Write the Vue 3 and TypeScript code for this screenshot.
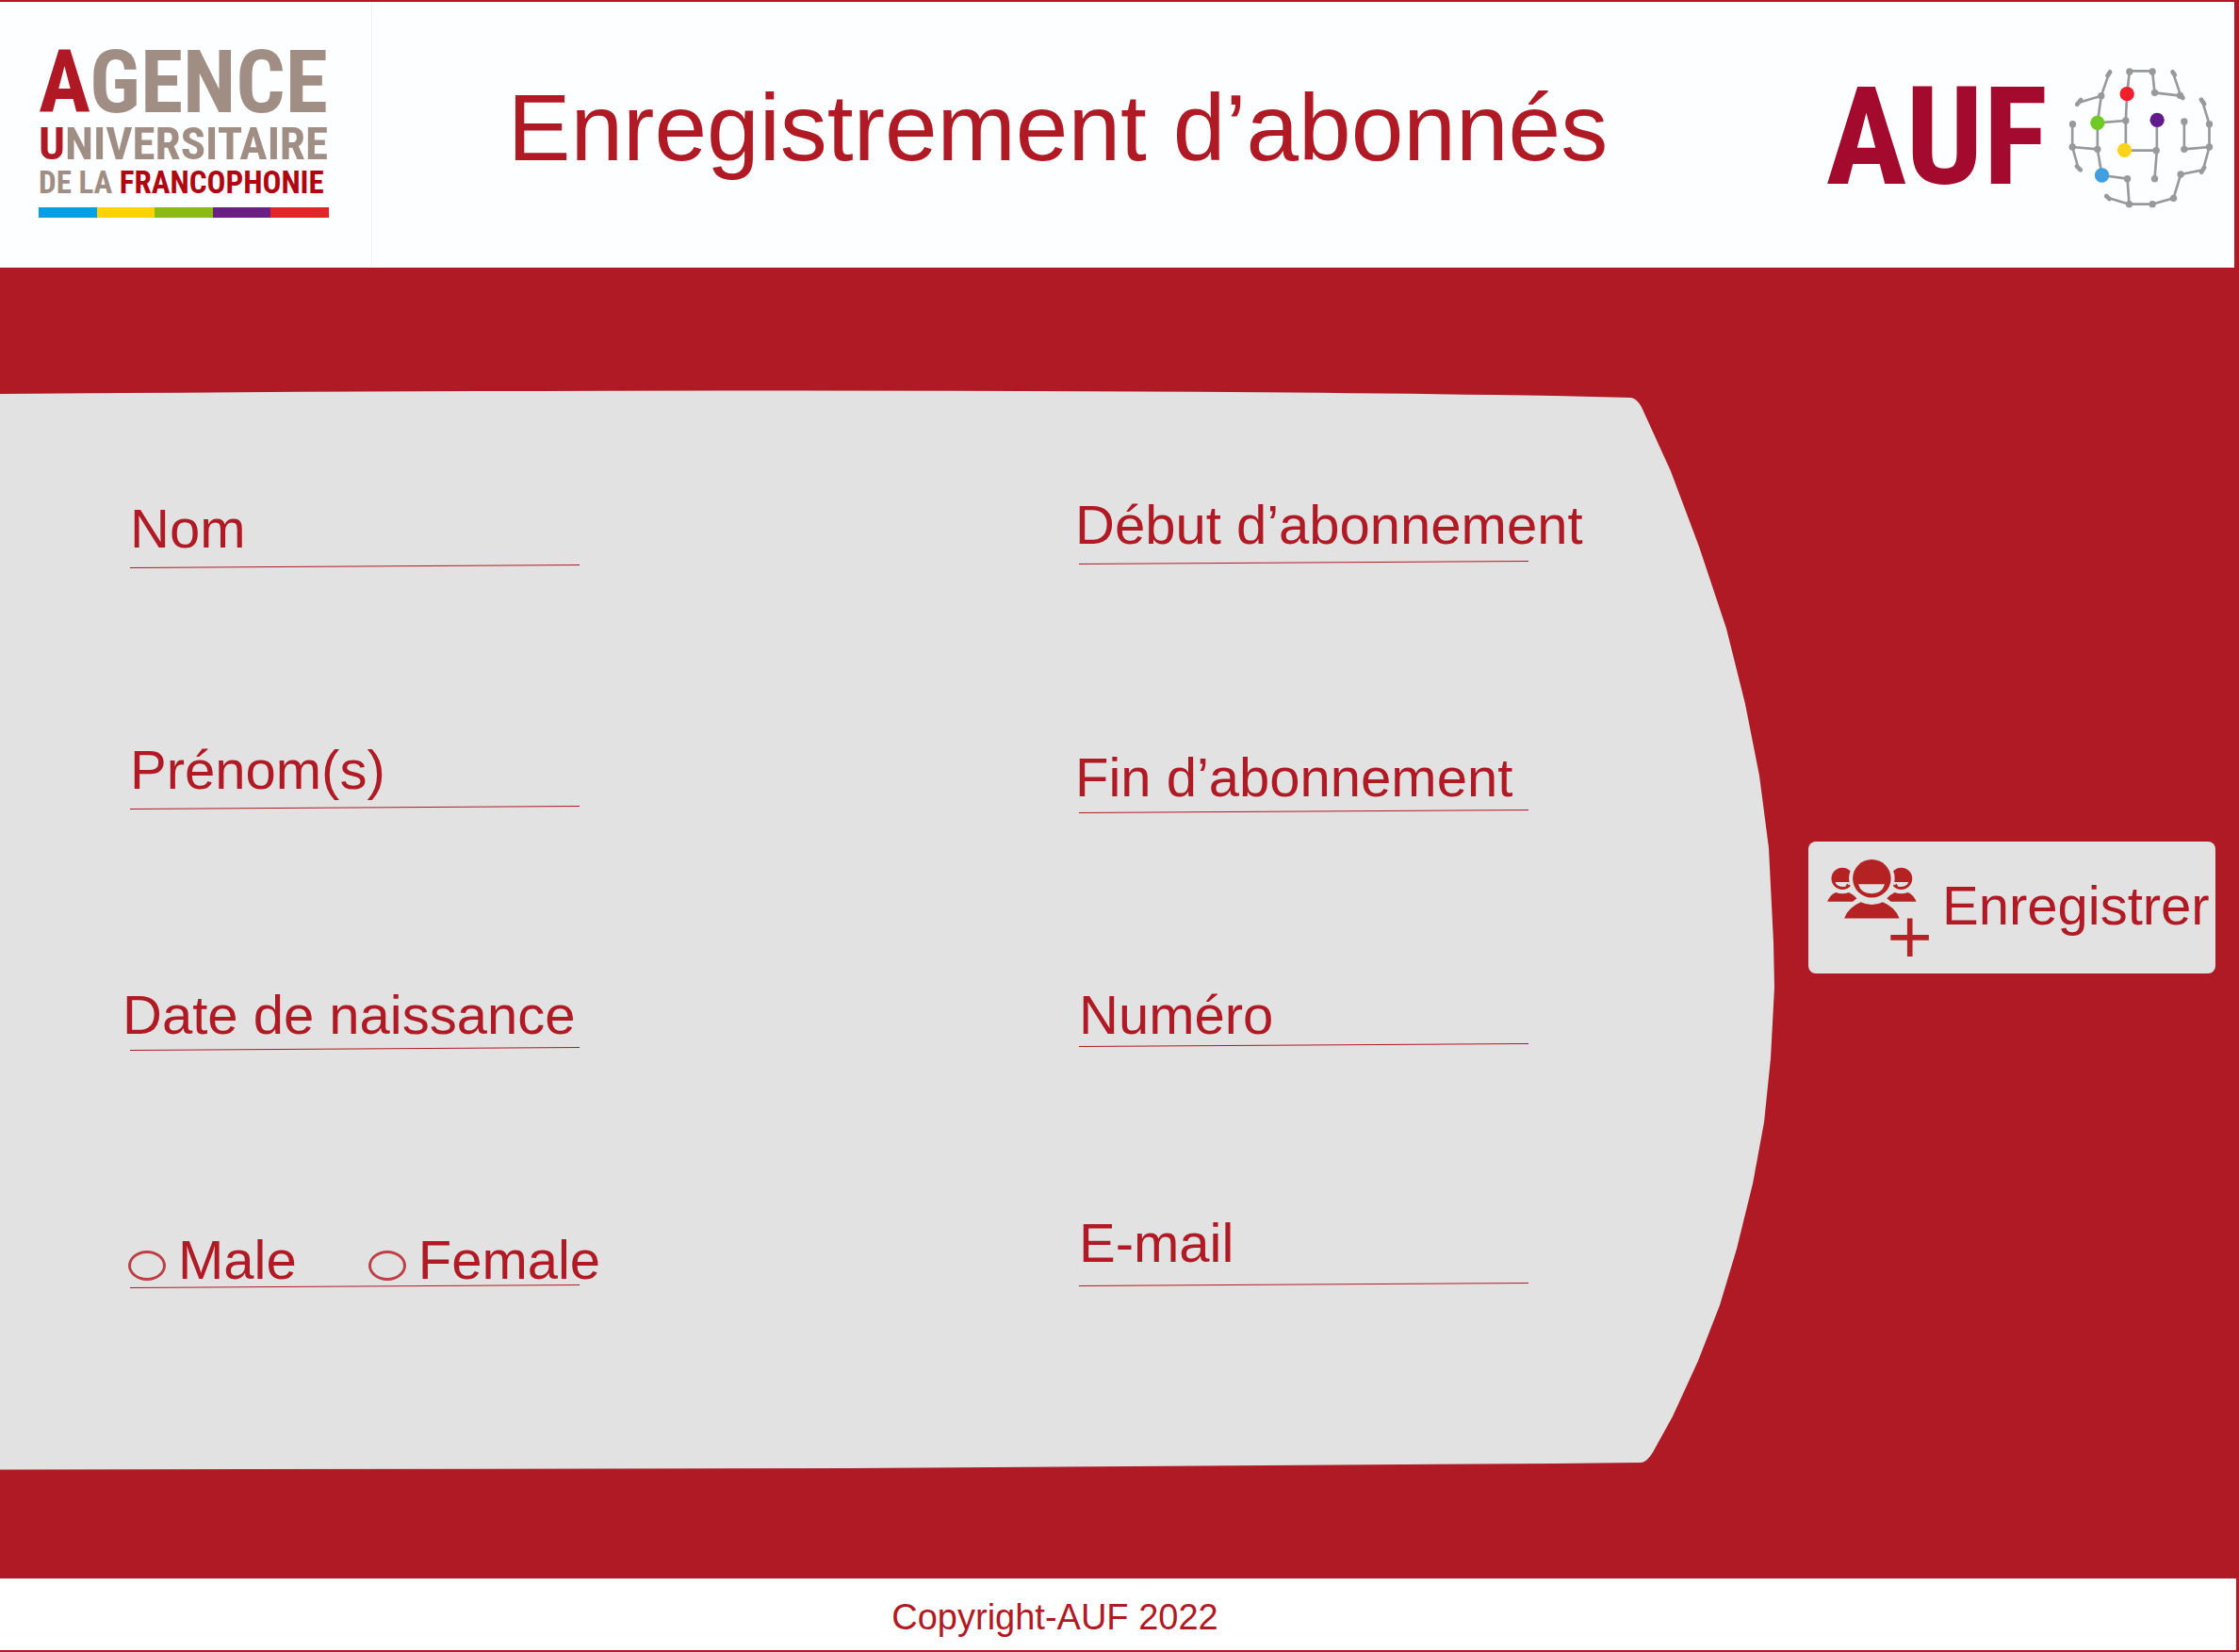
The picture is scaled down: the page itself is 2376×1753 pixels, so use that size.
<script setup lang="ts">
import { reactive, ref } from 'vue'

type Gap = 'tight' | 'snug' | 'normal' | 'loose'
type Hang = 'flush' | 'hang' | 'wide'

interface Field {
  id: string
  label: string
  type: string
  gap: Gap
  hang: Hang
}

const identity: Field[] = [
  { id: 'nom', label: 'Nom', type: 'text', gap: 'normal', hang: 'flush' },
  { id: 'prenom', label: 'Prénom(s)', type: 'text', gap: 'normal', hang: 'flush' },
  { id: 'naissance', label: 'Date de naissance', type: 'text', gap: 'snug', hang: 'wide' },
]

const subscription: Field[] = [
  { id: 'debut', label: 'Début d’abonnement', type: 'text', gap: 'normal', hang: 'hang' },
  { id: 'fin', label: 'Fin d’abonnement', type: 'text', gap: 'snug', hang: 'hang' },
  { id: 'numero', label: 'Numéro', type: 'tel', gap: 'tight', hang: 'flush' },
  { id: 'email', label: 'E-mail', type: 'email', gap: 'loose', hang: 'flush' },
]

const genders = ['Male', 'Female']

const values = reactive<Record<string, string>>({})
const gender = ref('')

const links = [
  'M1015 230L990 302L917 324',
  'M990 302L978 388V472L992 555L1073 566L1079 647H1153L1220 628L1243 552L1314 538L1334 465V392L1312 320',
  'M1079 647L1010 626',
  'M978 388L1068 381',
  'M1153 223H1080L1072 296L1068 381V476H1165',
  'M1153 225L1160 292L1243 302L1219 230',
  'M1167 380V476L1160 566',
  'M1254 384V472L1334 465',
  'M978 472L898 465V392',
  'M898 465L917 532',
]

const joints = [
  [990, 302], [1080, 225], [1153, 225], [1160, 292], [1068, 381], [978, 472],
  [898, 465], [899, 392], [1073, 566], [1079, 647], [1153, 647], [1220, 628],
  [1243, 552], [1334, 465], [1334, 392], [1254, 384], [1254, 472], [1165, 476],
  [1160, 566], [1241, 301],
]

const tips = [
  'M1010 238L1018 226', 'M913 329L925 315', 'M1217 226L1224 236', 'M1243 300L1250 309',
  'M1308 314L1318 328', 'M1318 530L1309 545', 'M912 526L924 538', 'M1006 621L1016 630',
]

const hubs = [
  { x: 1072, y: 296, color: '#ef1f2c' },
  { x: 978, y: 388, color: '#70c927' },
  { x: 1168, y: 379, color: '#621a8c' },
  { x: 1064, y: 475, color: '#fbd31b' },
  { x: 992, y: 555, color: '#419fdf' },
]
</script>

<template>
  <div class="page">
    <header class="header">
      <div class="agency">
        <svg class="agency-logo" viewBox="0 0 308 184" role="img" aria-label="Agence universitaire de la Francophonie">
          <text x="0" y="71" class="line-1"><tspan class="red">A</tspan>GENCE</text>
          <text x="0" y="121" class="line-2"><tspan class="red">U</tspan>NIVERSITAIRE</text>
          <text x="0" y="157" class="line-3">DE LA <tspan class="deep">FRANCOPHONIE</tspan></text>
          <g>
            <rect x="0" y="172" width="62" height="11" fill="#00a0e3" />
            <rect x="62" y="172" width="61" height="11" fill="#fdd400" />
            <rect x="123" y="172" width="62" height="11" fill="#8abb14" />
            <rect x="185" y="172" width="61" height="11" fill="#6a1f84" />
            <rect x="246" y="172" width="62" height="11" fill="#e32529" />
          </g>
        </svg>
      </div>
      <h1 class="title">Enregistrement d’abonnés</h1>
      <div class="brand">
        <span class="brand-name">AUF</span>
        <svg class="globe" viewBox="880 207 470 456" aria-hidden="true">
          <g fill="none" stroke="#999" stroke-width="8" stroke-linejoin="round">
            <path v-for="d in links" :key="d" :d="d" />
          </g>
          <g stroke="#999" stroke-width="14" stroke-linecap="round">
            <path v-for="d in tips" :key="d" :d="d" />
          </g>
          <circle v-for="(j, i) in joints" :key="i" :cx="j[0]" :cy="j[1]" r="11" fill="#999" />
          <circle v-for="h in hubs" :key="h.color" :cx="h.x" :cy="h.y" r="23" :fill="h.color" />
        </svg>
      </div>
    </header>

    <form class="main" @submit.prevent>
      <div class="panel">
        <svg class="panel-shape" viewBox="0 414 1884 1146" preserveAspectRatio="none" aria-hidden="true">
          <path
            fill="#e2e2e2"
            d="M0 418Q1050 410 1650 420L1731 422Q1737 423 1742 432L1773 500L1803 580L1832 667L1852 747L1867 823L1877 900L1882 1000L1883 1048L1879 1123L1872 1191L1860 1256L1843 1325L1825 1385L1802 1444L1775 1503L1754 1541Q1748 1551 1742 1552L1650 1553L900 1558L0 1559.500Z"
          />
        </svg>

        <div class="column column-identity">
          <div v-for="f in identity" :key="f.id" class="field">
            <div class="entry" :class="f.gap">
              <input :id="f.id" v-model="values[f.id]" class="input" :type="f.type" placeholder=" " />
              <label class="label" :class="f.hang" :for="f.id">{{ f.label }}</label>
            </div>
            <svg class="rule" viewBox="0 0 477 4" preserveAspectRatio="none" aria-hidden="true">
              <path d="M0 3.500L477 0.500" stroke="#b01a24" />
            </svg>
          </div>
          <div class="field">
            <div class="choices" role="radiogroup" aria-label="Genre">
              <label v-for="g in genders" :key="g" class="choice">
                <input v-model="gender" class="radio" type="radio" name="gender" :value="g" />
                <span>{{ g }}</span>
              </label>
            </div>
            <svg class="rule" viewBox="0 0 477 4" preserveAspectRatio="none" aria-hidden="true">
              <path d="M0 3.500L477 0.500" stroke="#b01a24" />
            </svg>
          </div>
        </div>

        <div class="column column-subscription">
          <div v-for="f in subscription" :key="f.id" class="field">
            <div class="entry" :class="f.gap">
              <input :id="f.id" v-model="values[f.id]" class="input" :type="f.type" placeholder=" " />
              <label class="label" :class="f.hang" :for="f.id">{{ f.label }}</label>
            </div>
            <svg class="rule" viewBox="0 0 477 4" preserveAspectRatio="none" aria-hidden="true">
              <path d="M0 3.500L477 0.500" stroke="#b01a24" />
            </svg>
          </div>
        </div>
      </div>

      <div class="actions">
        <button class="submit" type="submit">
          <svg class="people" viewBox="177 155 324 310" aria-hidden="true">
            <g fill="#b52224">
              <circle cx="225" cy="216" r="35" />
              <circle cx="413" cy="216" r="35" />
              <path d="M177 290Q185 268 204 260Q225 268 246 260Q262 268 271 279L258 290Z" />
              <path d="M461 290Q453 268 434 260Q413 268 392 260Q376 268 367 279L380 290Z" />
            </g>
            <g fill="#e2e2e2">
              <path d="M202 227H248V236Q238 243 225 242Q206 240 202 227Z" />
              <path d="M436 227H390V236Q400 243 413 242Q432 240 436 227Z" />
              <circle cx="319" cy="216" r="73" />
            </g>
            <g fill="#b52224">
              <path d="M240 232Q246 240 250 236Q246 248 232 249Z" />
              <path d="M398 232Q392 240 388 236Q392 248 406 249Z" />
              <circle cx="319" cy="216" r="61" />
              <path d="M231 343Q243 308 284 291Q319 308 354 291Q395 308 407 343Z" />
              <path d="M432 343H449V396H501V413H449V465H432V413H379V396H432Z" />
            </g>
            <path fill="#e2e2e2" d="M276 234H360Q352 264 318 264Q284 264 276 234Z" />
          </svg>
          <span class="submit-text">Enregistrer</span>
        </button>
      </div>
    </form>

    <footer class="footer">Copyright-AUF 2022</footer>
  </div>
</template>

<style>
body {
  margin: 0;
  background: #af1a24;
}
</style>

<style scoped>
.page {
  display: grid;
  grid-template-rows: auto 1fr auto;
  min-height: 100vh;
  box-sizing: border-box;
  padding: 2px 0;
  overflow: hidden;
  background: #af1a24;
  color: #b01a24;
  font-family: "Liberation Sans", Arial, sans-serif;
}

.header {
  display: grid;
  grid-template-columns: 395px 1fr 521px;
  align-items: center;
  height: 282px;
  margin-right: 5px;
  background: #fdfeff;
}

.agency {
  display: flex;
  align-items: center;
  align-self: stretch;
  box-sizing: border-box;
  padding: 0 0 6px 41px;
  border-right: 1px solid #f8f0f2;
}

.agency-logo {
  width: 308px;
  height: 184px;
  overflow: visible;
  fill: #a08e84;
  font-family: "Roboto Condensed", "Liberation Sans Narrow", "Liberation Sans", sans-serif;
  font-weight: 700;
}

.line-1 {
  font-size: 92px;
}

.line-2 {
  font-size: 49px;
}

.line-3 {
  font-size: 33px;
}

.red {
  fill: #b01824;
}

.deep {
  fill: #b00610;
}

.title {
  margin: 0;
  padding-bottom: 16px;
  font-size: 100px;
  font-weight: 400;
  line-height: 112px;
  text-align: center;
  white-space: nowrap;
}

.brand {
  display: flex;
  align-items: center;
  justify-content: flex-end;
  gap: 20px;
  padding: 6px 21px 0 0;
}

.brand-name {
  color: #a30a2d;
  font-family: "Roboto Condensed", "Liberation Sans Narrow", "Liberation Sans", sans-serif;
  font-size: 144px;
  font-weight: 700;
  line-height: 152px;
}

.globe {
  width: 157px;
  height: 152px;
}

.main {
  display: grid;
  grid-template-columns: 1884fr 492fr;
  padding: 130px 0 115px;
}

.panel {
  position: relative;
  display: grid;
  grid-template-columns: 1007fr 739fr;
  align-items: start;
  padding: 36px 0 193px 138px;
}

.panel-shape {
  position: absolute;
  inset: 0;
  width: 100%;
  height: 100%;
}

.column {
  position: relative;
  display: grid;
  font-size: 58px;
  line-height: 52px;
  white-space: nowrap;
}

.column-identity {
  grid-template-rows: 153px 256px 256px 252px;
}

.column-subscription {
  grid-template-rows: 149px 264px 248px 254px;
}

.field {
  display: flex;
  flex-direction: column;
  justify-content: flex-end;
  width: 477px;
  max-width: 100%;
}

.entry {
  display: grid;
}

.input,
.label {
  grid-area: 1 / 1;
}

.input {
  width: 100%;
  height: 52px;
  box-sizing: border-box;
  padding: 0;
  border: 0;
  outline: 0;
  background: transparent;
  color: inherit;
  font: inherit;
}

.label {
  pointer-events: none;
}

.input:not(:placeholder-shown) + .label {
  opacity: 0;
}

.tight {
  padding-bottom: 4px;
}

.snug {
  padding-bottom: 8px;
}

.normal {
  padding-bottom: 12px;
}

.loose {
  padding-bottom: 16px;
}

.flush {
  margin-left: 0;
}

.hang {
  margin-left: -4px;
}

.wide {
  margin-left: -8px;
}

.rule {
  display: block;
  width: 100%;
  height: 4px;
}

.choices {
  display: flex;
  gap: 76px;
  margin-left: -2px;
}

.choice {
  display: flex;
  align-items: flex-end;
  gap: 13px;
}

.radio {
  appearance: none;
  flex: none;
  width: 40px;
  height: 32px;
  box-sizing: border-box;
  margin: 0 0 4px;
  border: 3px solid #bc4044;
  border-radius: 50%;
}

.radio:checked {
  background: radial-gradient(#b01a24 40%, transparent 45%);
}

.actions {
  padding: 479px 25px 0 35px;
}

.submit {
  display: flex;
  align-items: center;
  gap: 14px;
  width: 100%;
  height: 140px;
  padding: 0 0 0 20px;
  border: 0;
  border-radius: 8px;
  background: #e2e2e2;
  color: inherit;
  font: inherit;
  font-size: 58px;
  line-height: 64px;
  cursor: pointer;
}

.submit-text {
  padding-bottom: 4px;
}

.people {
  flex: none;
  width: 108px;
  height: 103px;
}

.footer {
  margin-right: 3px;
  padding: 6px 134px 0 0;
  background: #fff;
  font-size: 38px;
  line-height: 70px;
  text-align: center;
}
</style>
